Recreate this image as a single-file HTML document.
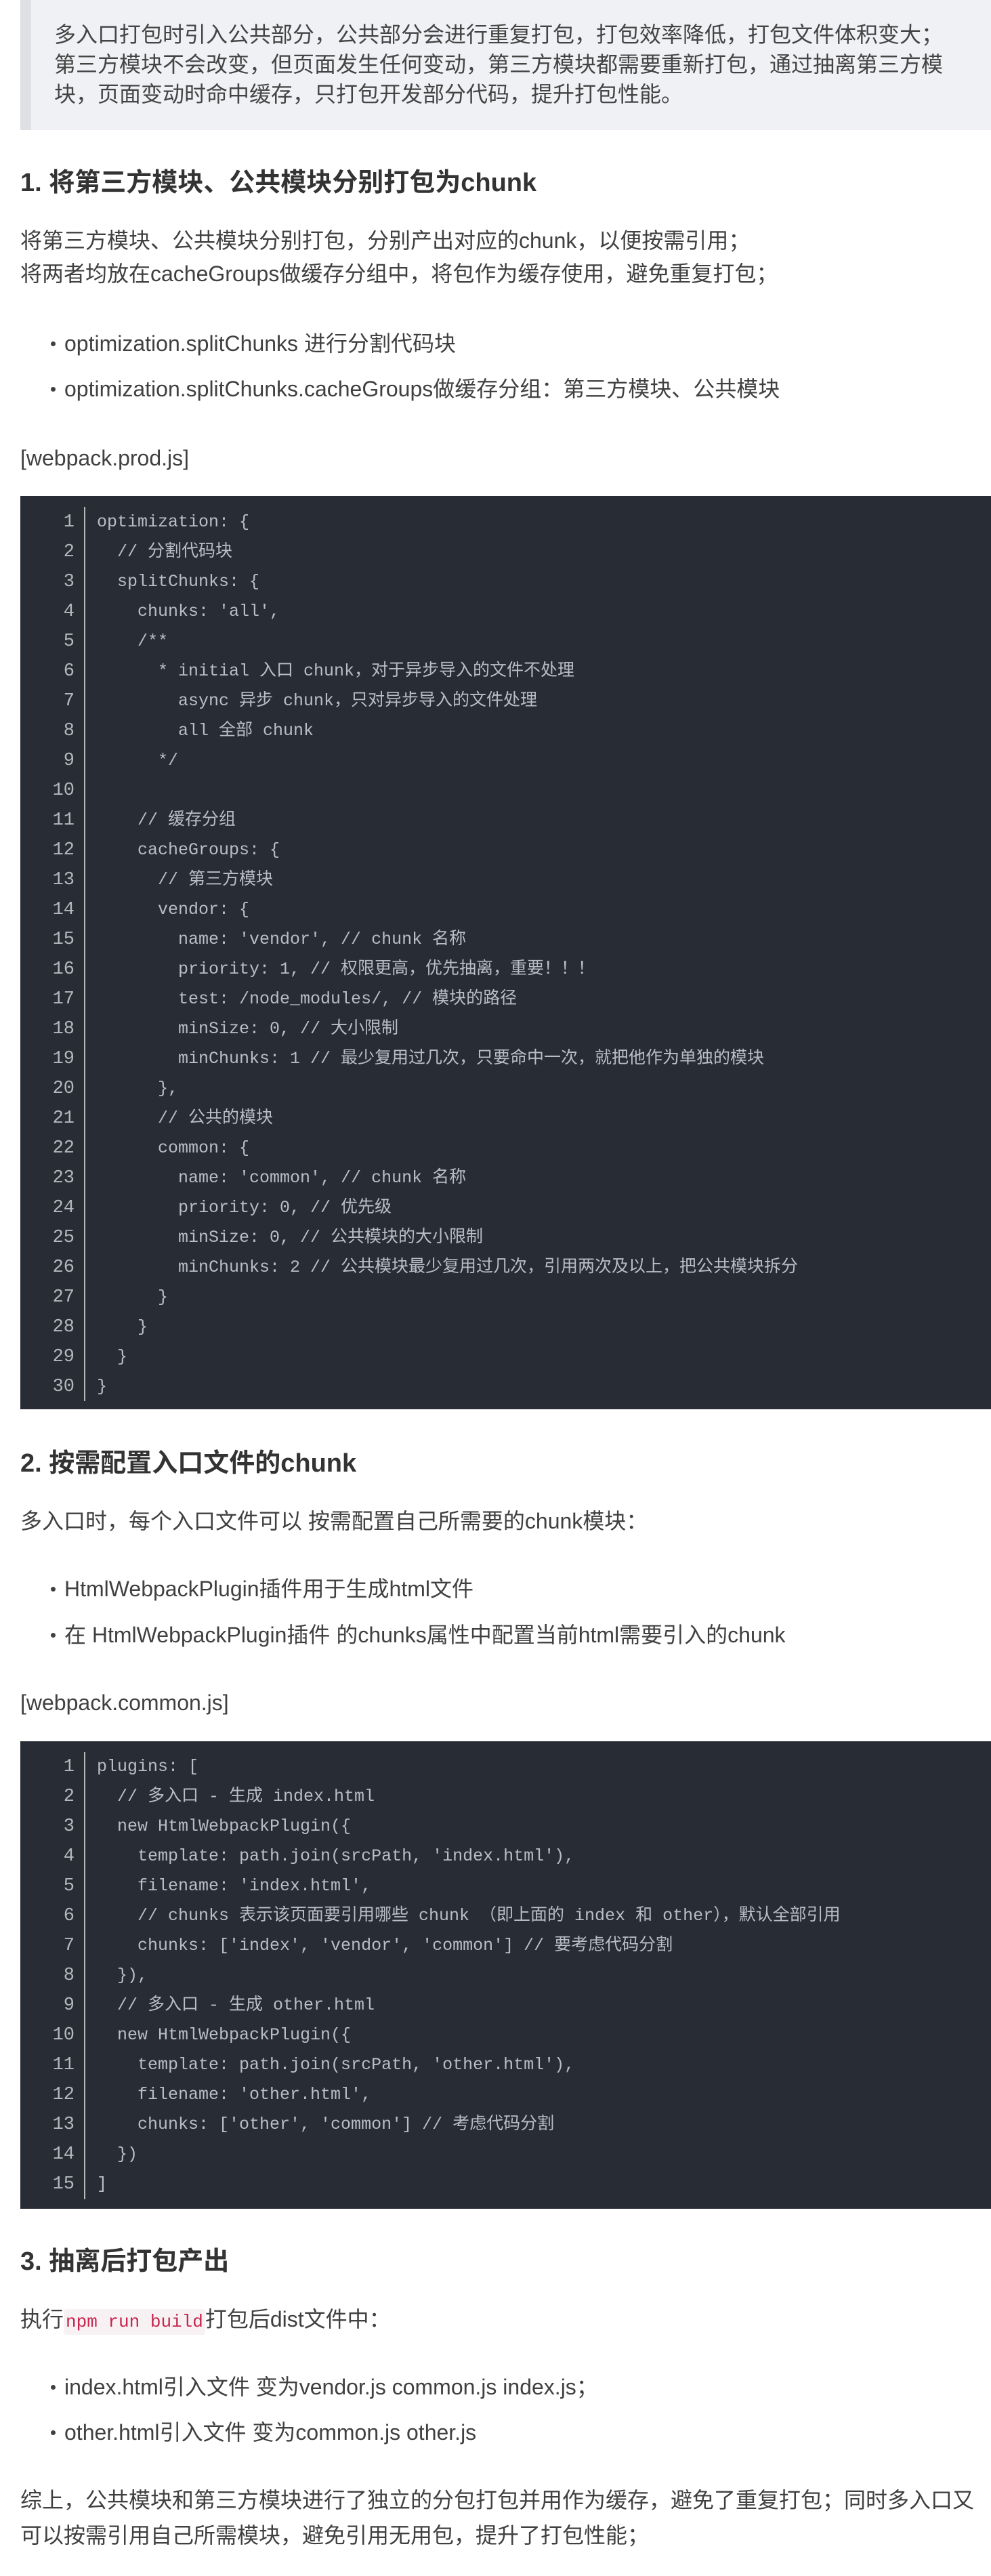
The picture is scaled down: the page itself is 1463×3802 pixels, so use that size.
<!DOCTYPE html>
<html><head><meta charset="utf-8"><style>
*{margin:0;padding:0;box-sizing:border-box}
html,body{width:1463px;height:3802px;background:#fff;overflow:hidden}
body{position:relative;font-family:"Liberation Sans","Noto Sans CJK SC",sans-serif;color:#404040;font-size:32px}
.t{position:absolute;left:30px;line-height:48px;white-space:nowrap}
.h{font-weight:bold;font-size:38px;color:#333}
.li{left:95px}
.li:before{content:"";position:absolute;left:-20px;top:21px;width:7px;height:7px;border-radius:50%;background:#404040}
.bq{position:absolute;left:30px;top:0;width:1433px;height:192px;background:#f0f1f4;border-left:16px solid #dfe0e3}
.bq div{position:absolute;left:34px;top:29px;line-height:44px;font-size:32px;white-space:nowrap;color:#444}
.code{position:absolute;left:30px;width:1433px;background:#282c34;font-family:"Liberation Mono","Noto Sans CJK SC",monospace;font-size:25px;color:#b8bec8}
.code .g{position:absolute;left:94px;width:2px;background:#b8b8b8}
.code .n{position:absolute;left:0;width:80px;text-align:right;line-height:44px;color:#b4b8be;font-size:27px}
.code .c{position:absolute;left:113px;line-height:44px;white-space:pre}
.ic{font-family:"Liberation Mono",monospace;font-size:26px;color:#c7254e;background:#f7f1f3;border-radius:4px;padding:4px 3px}
</style></head><body>
<div class="bq"><div>多入口打包时引入公共部分，公共部分会进行重复打包，打包效率降低，打包文件体积变大；<br>第三方模块不会改变，但页面发生任何变动，第三方模块都需要重新打包，通过抽离第三方模<br>块，页面变动时命中缓存，只打包开发部分代码，提升打包性能。</div></div>

<div class="t h" style="top:246px">1. 将第三方模块、公共模块分别打包为chunk</div>
<div class="t" style="top:331px">将第三方模块、公共模块分别打包，分别产出对应的chunk，以便按需引用；</div>
<div class="t" style="top:380px">将两者均放在cacheGroups做缓存分组中，将包作为缓存使用，避免重复打包；</div>
<div class="t li" style="top:483px">optimization.splitChunks 进行分割代码块</div>
<div class="t li" style="top:550px">optimization.splitChunks.cacheGroups做缓存分组：第三方模块、公共模块</div>
<div class="t" style="top:652px">[webpack.prod.js]</div>

<div class="code" style="top:732px;height:1348px">
<div class="g" style="top:16px;height:1320px"></div>
<div class="n" style="top:17px">1<br>2<br>3<br>4<br>5<br>6<br>7<br>8<br>9<br>10<br>11<br>12<br>13<br>14<br>15<br>16<br>17<br>18<br>19<br>20<br>21<br>22<br>23<br>24<br>25<br>26<br>27<br>28<br>29<br>30</div>
<div class="c" style="top:17px">optimization: {
  // 分割代码块
  splitChunks: {
    chunks: 'all',
    /**
      * initial 入口 chunk，对于异步导入的文件不处理
        async 异步 chunk，只对异步导入的文件处理
        all 全部 chunk
      */

    // 缓存分组
    cacheGroups: {
      // 第三方模块
      vendor: {
        name: 'vendor', // chunk 名称
        priority: 1, // 权限更高，优先抽离，重要！！！
        test: /node_modules/, // 模块的路径
        minSize: 0, // 大小限制
        minChunks: 1 // 最少复用过几次，只要命中一次，就把他作为单独的模块
      },
      // 公共的模块
      common: {
        name: 'common', // chunk 名称
        priority: 0, // 优先级
        minSize: 0, // 公共模块的大小限制
        minChunks: 2 // 公共模块最少复用过几次，引用两次及以上，把公共模块拆分
      }
    }
  }
}</div>
</div>

<div class="t h" style="top:2136px">2. 按需配置入口文件的chunk</div>
<div class="t" style="top:2221px">多入口时，每个入口文件可以 按需配置自己所需要的chunk模块：</div>
<div class="t li" style="top:2321px">HtmlWebpackPlugin插件用于生成html文件</div>
<div class="t li" style="top:2389px">在 HtmlWebpackPlugin插件 的chunks属性中配置当前html需要引入的chunk</div>
<div class="t" style="top:2489px">[webpack.common.js]</div>

<div class="code" style="top:2570px;height:690px">
<div class="g" style="top:16px;height:660px"></div>
<div class="n" style="top:16px">1<br>2<br>3<br>4<br>5<br>6<br>7<br>8<br>9<br>10<br>11<br>12<br>13<br>14<br>15</div>
<div class="c" style="top:16px">plugins: [
  // 多入口 - 生成 index.html
  new HtmlWebpackPlugin({
    template: path.join(srcPath, 'index.html'),
    filename: 'index.html',
    // chunks 表示该页面要引用哪些 chunk （即上面的 index 和 other），默认全部引用
    chunks: ['index', 'vendor', 'common'] // 要考虑代码分割
  }),
  // 多入口 - 生成 other.html
  new HtmlWebpackPlugin({
    template: path.join(srcPath, 'other.html'),
    filename: 'other.html',
    chunks: ['other', 'common'] // 考虑代码分割
  })
]</div>
</div>

<div class="t h" style="top:3314px">3. 抽离后打包产出</div>
<div class="t" style="top:3399px">执行<span class="ic">npm run build</span>打包后dist文件中：</div>
<div class="t li" style="top:3499px">index.html引入文件 变为vendor.js common.js index.js；</div>
<div class="t li" style="top:3566px">other.html引入文件 变为common.js other.js</div>
<div class="t" style="top:3666px">综上，公共模块和第三方模块进行了独立的分包打包并用作为缓存，避免了重复打包；同时多入口又</div>
<div class="t" style="top:3718px">可以按需引用自己所需模块，避免引用无用包，提升了打包性能；</div>
</body></html>
